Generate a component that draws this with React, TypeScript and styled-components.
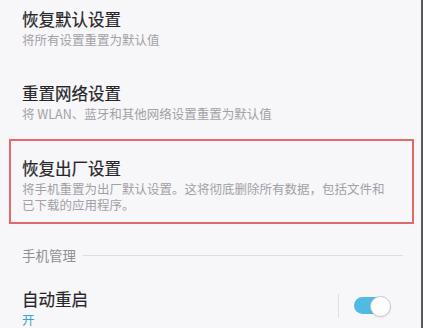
import React from "react";
import styled, { createGlobalStyle } from "styled-components";

const GlobalStyle = createGlobalStyle`
  html, body {
    margin: 0;
    padding: 0;
    background: #f7f6f9;
  }
  body {
    font-family: "Noto Sans CJK SC", "Noto Sans", sans-serif;
    overflow: hidden;
  }
`;

const Frame = styled.div`
  display: flex;
  width: 423px;
  height: 328px;
  overflow: hidden;
  background: #f7f6f9;
`;

const Screen = styled.div`
  flex: 1;
  min-width: 0;
  display: flex;
  flex-direction: column;
  /* list is scrolled a little past its top */
  margin-top: -11.5px;
`;

const Edge = styled.div`
  width: 2px;
  flex: none;
  background: #58575c;
`;

const Item = styled.div<{ $highlight?: boolean }>`
  position: relative;
  display: flex;
  align-items: flex-start;
  padding: 19px 0 15.5px 22px;

  &::after {
    content: "";
    display: ${({ $highlight }) => ($highlight ? "block" : "none")};
    position: absolute;
    top: 1.5px;
    bottom: 4px;
    left: 9px;
    right: 7px;
    border: 2px solid #e36a6a;
    pointer-events: none;
  }
`;

const Texts = styled.div`
  flex: 1;
  min-width: 0;
  display: flex;
  flex-direction: column;
  gap: 2px;
  padding-right: 28px;
`;

const Title = styled.div`
  font-size: 16.5px;
  line-height: 22px;
  font-weight: 400;
  color: #262628;
  -webkit-text-stroke: 0.2px #262628;
`;

const Summary = styled.div<{ $accent?: boolean }>`
  font-size: 12.5px;
  line-height: 16px;
  color: ${({ $accent }) => ($accent ? "#3aa3c9" : "#a2a1a6")};
`;

const Divider = styled.div`
  height: 1px;
  margin: 0 18px 0 14px;
  background: #e4e3e7;
`;

const SectionHeader = styled.div`
  display: flex;
  align-items: center;
  gap: 7px;
  padding: 18px 18px 4.5px 22px;
  font-size: 13.5px;
  line-height: 18px;
  color: #8f8e93;

  &::after {
    content: "";
    flex: 1;
    height: 1px;
    background: #dedde2;
  }
`;

const Trailing = styled.div`
  display: flex;
  align-items: center;
  gap: 15px;
  margin-top: 6px;
  padding-right: 30px;
`;

const VLine = styled.div`
  width: 1px;
  height: 24px;
  background: #e2e1e5;
`;

const Switch = styled.div<{ $on?: boolean }>`
  position: relative;
  width: 37px;
  height: 22px;
  display: flex;
  align-items: center;

  &::before {
    content: "";
    width: 34px;
    height: 17px;
    border-radius: 9px;
    background: ${({ $on }) => ($on ? "#4fbbe3" : "#cfced3")};
  }
`;

const Knob = styled.span<{ $on?: boolean }>`
  position: absolute;
  top: 1px;
  ${({ $on }) => ($on ? "right: 0;" : "left: 0;")}
  width: 19px;
  height: 19px;
  border-radius: 50%;
  background: #fdfdfe;
  border: 1px solid #c9c8cd;
  box-shadow: 0 1px 2px rgba(0, 0, 0, 0.08);
`;

type Row = { title: string; summary: string; highlight?: boolean };

const resetRows: Row[] = [
  { title: "恢复默认设置", summary: "将所有设置重置为默认值" },
  { title: "重置网络设置", summary: "将 WLAN、蓝牙和其他网络设置重置为默认值" },
  {
    title: "恢复出厂设置",
    summary: "将手机重置为出厂默认设置。这将彻底删除所有数据，包括文件和已下载的应用程序。",
    highlight: true,
  },
];

export default function App() {
  return (
    <>
      <GlobalStyle />
      <Frame>
        <Screen>
          {resetRows.map((row, i) => (
            <React.Fragment key={row.title}>
              <Item $highlight={row.highlight}>
                <Texts>
                  <Title>{row.title}</Title>
                  <Summary>{row.summary}</Summary>
                </Texts>
              </Item>
              {i === 0 && <Divider />}
            </React.Fragment>
          ))}
          <SectionHeader>手机管理</SectionHeader>
          <Item>
            <Texts>
              <Title>自动重启</Title>
              <Summary $accent>开</Summary>
            </Texts>
            <Trailing>
              <VLine />
              <Switch $on>
                <Knob $on />
              </Switch>
            </Trailing>
          </Item>
        </Screen>
        <Edge />
      </Frame>
    </>
  );
}
